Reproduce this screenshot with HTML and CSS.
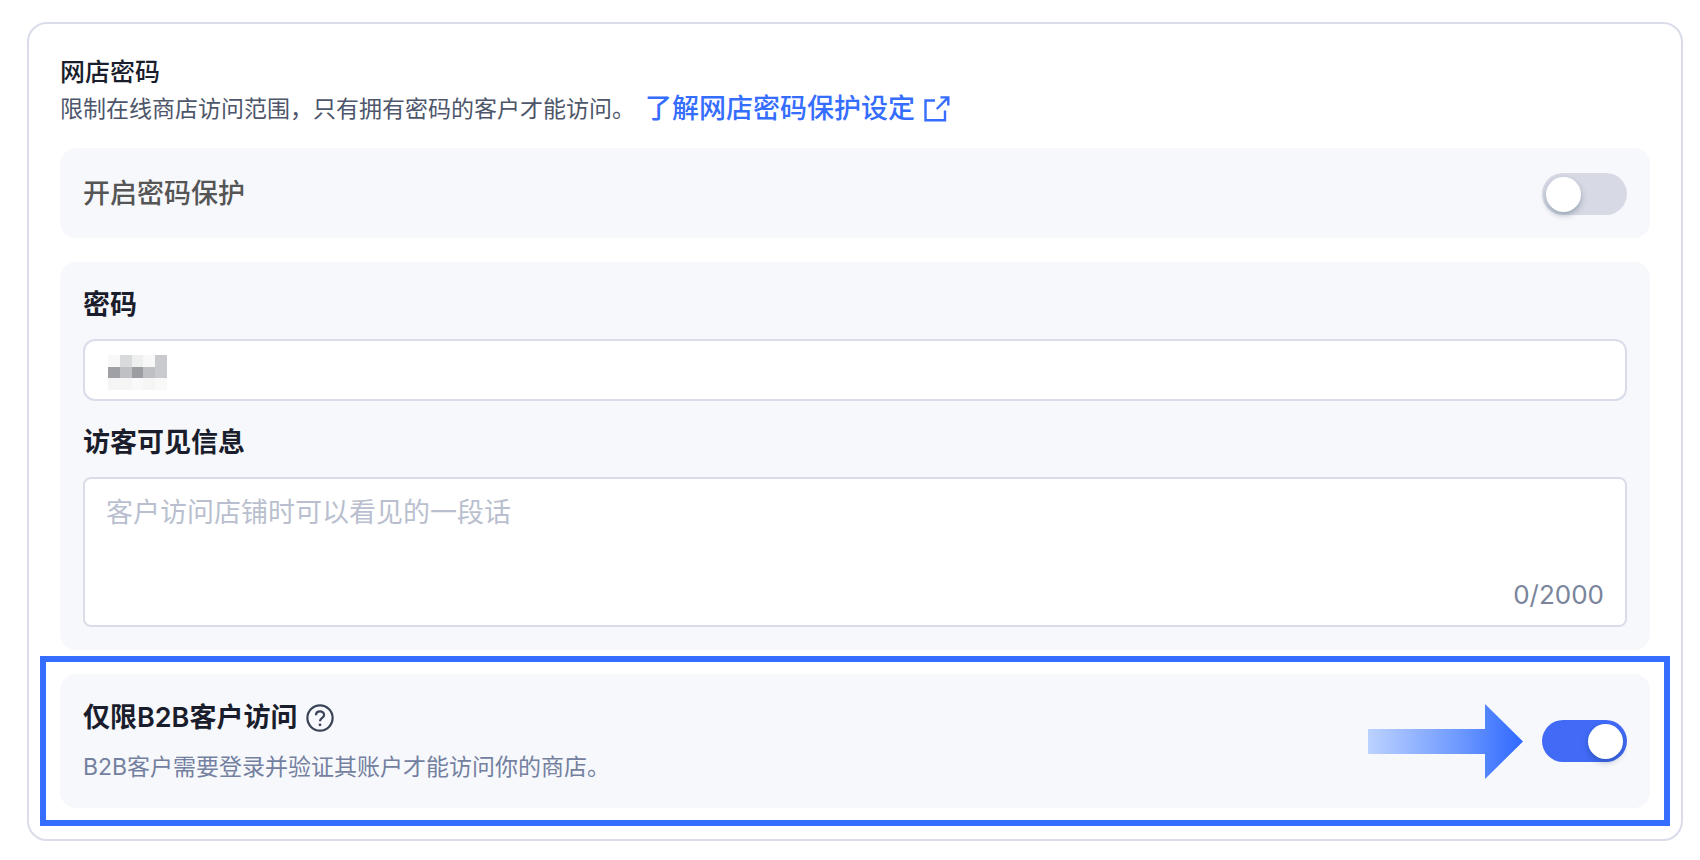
FILE: index.html
```html
<!DOCTYPE html>
<html lang="zh-CN">
<head>
<meta charset="utf-8">
<meta name="viewport" content="width=device-width, initial-scale=1">
<title>网店密码</title>
<link rel="stylesheet" href="styles.css">
</head>
<body>
<main class="card">
  <header class="card-head">
    <h1 class="card-title">网店密码</h1>
    <div class="card-desc">
      <span>限制在线商店访问范围，只有拥有密码的客户才能访问。</span>
      <a class="learn-link" href="#">了解网店密码保护设定
        <svg class="link-icon" viewBox="0 0 26 26" aria-hidden="true"><path d="M11 4.5H1.5V24.2H21V14.5M16.5 1.4H24.3V9.5M24 1.7L12.8 13"/></svg>
      </a>
    </div>
  </header>

  <section class="panel panel-row">
    <label class="switch-label" for="protect">开启密码保护</label>
    <input class="switch" type="checkbox" role="switch" id="protect">
  </section>

  <section class="panel panel-form">
    <label class="field-label" for="password">密码</label>
    <div class="field">
      <input class="text-input" type="text" id="password">
      <svg class="mosaic" viewBox="0 0 15 9" preserveAspectRatio="none" shape-rendering="crispEdges" aria-hidden="true">
        <path fill="#f8f8f8" d="M0 0h3v3H0zM9 0h3v3H9z"/>
        <path fill="#d9dadc" d="M3 0h3v3H3z"/>
        <path fill="#eef0f0" d="M6 0h3v3H6z"/>
        <path fill="#c9cacd" d="M12 0h3v6h-3z"/>
        <path fill="#9fa0a5" d="M0 3h3v3H0z"/>
        <path fill="#bfc0c4" d="M3 3h3v3H3zM9 3h3v3H9z"/>
        <path fill="#9c9da2" d="M6 3h3v3H6z"/>
        <path fill="#f5f5f5" d="M0 6h6v3H0zM9 6h3v3H9z"/>
        <path fill="#f9f9f9" d="M6 6h3v3H6zM12 6h3v3h-3z"/>
      </svg>
    </div>
    <label class="field-label" for="message">访客可见信息</label>
    <div class="field">
      <textarea class="text-area" id="message" maxlength="2000" placeholder="客户访问店铺时可以看见的一段话"></textarea>
      <span class="counter">0/2000</span>
    </div>
  </section>

  <section class="panel panel-row panel-b2b">
    <div class="b2b-text">
      <div class="b2b-title">
        <label for="b2b">仅限B2B客户访问</label>
        <button class="help" type="button" aria-label="帮助">
          <svg class="help-icon" viewBox="0 0 28 28" aria-hidden="true"><circle cx="14" cy="14" r="12.6"/><path d="M10 11.2C10 8.8 11.8 7.3 14 7.3S18.1 8.8 18.1 11C18.1 13.9 14 14.1 14 17.3"/><circle class="dot" cx="14" cy="20.8" r="1.4"/></svg>
        </button>
      </div>
      <p class="b2b-desc">B2B客户需要登录并验证其账户才能访问你的商店。</p>
    </div>
    <svg class="arrow" viewBox="0 0 155 75" aria-hidden="true">
      <defs><linearGradient id="fade"><stop offset="0" stop-color="#bcd2ff"/><stop offset="0.6" stop-color="#6c98ff"/><stop offset="1" stop-color="#2e68ff"/></linearGradient></defs>
      <path fill="url(#fade)" d="M0 25H117V0L155 37.5L117 75V50H0Z"/>
    </svg>
    <input class="switch" type="checkbox" role="switch" id="b2b" checked>
  </section>
</main>
</body>
</html>
```
FILE: styles.css
```css
* {
  box-sizing: border-box;
}

body {
  margin: 22px 17px 19px 27px;
  background: #fff;
  color: #1a1d2b;
  font-family: Inter, "Noto Sans CJK SC", sans-serif;
  font-size: 27px;
}

h1,
p {
  margin: 0;
}

input,
textarea,
button {
  margin: 0;
  font: inherit;
}

.card {
  display: flex;
  flex-direction: column;
  gap: 24px;
  padding: 31px;
  border: 2px solid #dadde9;
  border-radius: 20px;
}

.card-head {
  margin-bottom: -5px;
}

.card-title {
  font-size: 25px;
  font-weight: 500;
  line-height: 34px;
}

.card-desc {
  display: flex;
  flex-wrap: wrap;
  align-items: center;
  gap: 0 10px;
  color: #4d566b;
  font-size: 23px;
  line-height: 40px;
}

.learn-link {
  display: flex;
  align-items: center;
  gap: 9px;
  color: #356dff;
  font-size: 27px;
  font-weight: 500;
  text-decoration: none;
}

.link-icon {
  width: 26px;
  height: 26px;
  fill: none;
  stroke: currentColor;
  stroke-width: 2.4;
}

.panel {
  padding: 25px 23px 23px;
  border-radius: 16px;
  background: #f7f8fc;
}

.panel-row {
  display: flex;
  align-items: center;
  gap: 19px;
}

.switch-label {
  flex: 1;
  color: #555;
  font-weight: 500;
  line-height: 42px;
}

.switch {
  display: flex;
  flex: none;
  align-items: center;
  width: 85px;
  height: 42px;
  padding: 0 4px;
  border-radius: 21px;
  background: #d7dae5;
  appearance: none;
}

.switch::before {
  content: "";
  width: 35px;
  height: 35px;
  border-radius: 50%;
  background: #fff;
  box-shadow: 0 3px 6px rgb(0 35 60 / 30%);
}

.switch:checked {
  justify-content: flex-end;
  background: #416bf7;
}

.panel-form {
  display: flex;
  flex-direction: column;
}

.field-label {
  margin-bottom: 16px;
  font-weight: 600;
  line-height: 36px;
}

.field {
  position: relative;
  display: flex;
}

.field + .field-label {
  margin-top: 24px;
}

.text-input,
.text-area {
  width: 100%;
  border: 2px solid #dadde9;
  background: #fff;
  color: inherit;
}

.text-input {
  height: 62px;
  padding: 0 22px;
  border-radius: 12px;
}

.mosaic {
  position: absolute;
  top: 16px;
  left: 25px;
  width: 59px;
  height: 35px;
}

.text-area {
  height: 150px;
  padding: 14px 21px;
  border-radius: 8px;
  line-height: 40px;
  resize: none;
}

.text-area::placeholder {
  color: #b9bfce;
}

.counter {
  position: absolute;
  right: 23px;
  bottom: 12px;
  color: #7a849b;
  font-size: 26px;
  line-height: 40px;
}

.panel-b2b {
  position: relative;
  padding: 24px 23px;
}

/* Frame drawing attention to the whole B2B row. */
.panel-b2b::after {
  content: "";
  position: absolute;
  inset: -18px -20px;
  border: 6px solid #356dff;
  pointer-events: none;
}

.b2b-text {
  flex: 1;
}

.b2b-title {
  display: flex;
  align-items: center;
  gap: 9px;
  margin: 2px 0 14px;
  font-weight: 600;
  line-height: 36px;
}

.help {
  display: flex;
  padding: 0;
  border: 0;
  background: none;
  color: #3a4256;
}

.help-icon {
  width: 28px;
  height: 28px;
  fill: none;
  stroke: currentColor;
  stroke-width: 2.2;
}

.help-icon .dot {
  fill: currentColor;
  stroke: none;
}

.b2b-desc {
  color: #7480a0;
  font-size: 23px;
  line-height: 34px;
}

.arrow {
  flex: none;
  width: 155px;
  height: 75px;
}
```
